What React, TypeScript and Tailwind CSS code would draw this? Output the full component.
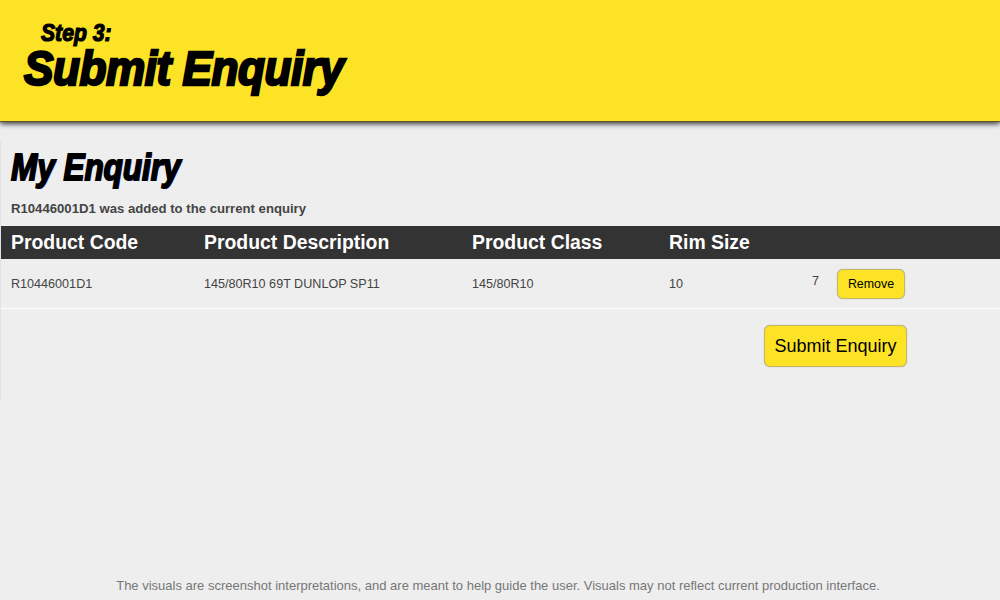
import React from 'react';

const headingFont = "font-['Liberation_Sans',Arial,sans-serif]";

const Logo: React.FC = () => (
  <div className="h-[122px] bg-[#fce325] shadow-[0_2px_5px_rgba(0,0,0,0.75)] border-b border-[#5c5528] pt-[20px] relative">
    <div className="ml-[41px] h-[26px] text-[23px] leading-[26px] font-bold italic text-black [-webkit-text-stroke:1.2px_black] origin-left scale-x-[0.92] whitespace-nowrap">
      Step 3:
    </div>
    <div className="ml-[24px] h-[46px] text-[49px] leading-[44px] font-bold italic text-black [-webkit-text-stroke:2.5px_black] origin-left scale-x-[0.9] whitespace-nowrap tracking-[-0.5px]">
      Submit Enquiry
    </div>
  </div>
);

export default function App() {
  return (
    <div className={`min-h-[600px] h-[600px] overflow-hidden bg-[#eeeeee] flex flex-col ${headingFont}`}>
      <Logo />

      <div className="mt-[19px] h-[260px] border-l border-[#e2e2e2]">
        <div className="pl-[10px] pt-[4px] h-[50px]">
          <h1 className="h-[46px] text-[37px] leading-[46px] font-bold italic text-black [-webkit-text-stroke:1.8px_black] origin-left scale-x-[0.85] whitespace-nowrap [text-shadow:1px_1px_0_#3b5bdb]">
            My Enquiry
          </h1>
        </div>
        <p className="pl-[10px] mt-[8px] h-[20px] text-[13.15px] leading-[20px] font-bold text-[#444444]">
          R10446001D1 was added to the current enquiry
        </p>

        <div className="mt-[7px] h-[33px] bg-[#333333] grid grid-cols-[193px_268px_197px_1fr] pl-[10px] items-center text-[19.4px] font-bold text-white">
          <div>Product Code</div>
          <div>Product Description</div>
          <div>Product Class</div>
          <div>Rim Size</div>
        </div>

        <div className="h-[50px] pt-[1px] border-b border-white grid grid-cols-[193px_268px_197px_143px_25px_auto] pl-[10px] items-center text-[12.6px] text-[#444444]">
          <div>R10446001D1</div>
          <div>145/80R10 69T DUNLOP SP11</div>
          <div>145/80R10</div>
          <div>10</div>
          <div className="-mt-[6px]">7</div>
          <button className="w-[68px] h-[30px] pt-[2px] -mt-[1px] rounded-[6px] bg-[#fce325] border border-[#c4b76a] text-[12.4px] text-black shadow-[0_0_1px_rgba(0,0,0,0.3)]">
            Remove
          </button>
        </div>

        <div className="flex justify-end pr-[93px] pt-[16px]">
          <button className="w-[143px] h-[42px] rounded-[6px] bg-[#fce325] border border-[#c4b76a] text-[18px] text-black shadow-[0_0_1px_rgba(0,0,0,0.3)]">
            Submit Enquiry
          </button>
        </div>
      </div>

      <div className="mt-auto h-[29px] pr-[4px] text-center text-[13px] leading-[29px] text-[#777777]">
        The visuals are screenshot interpretations, and are meant to help guide the user. Visuals may not reflect current production interface.
      </div>
    </div>
  );
}
